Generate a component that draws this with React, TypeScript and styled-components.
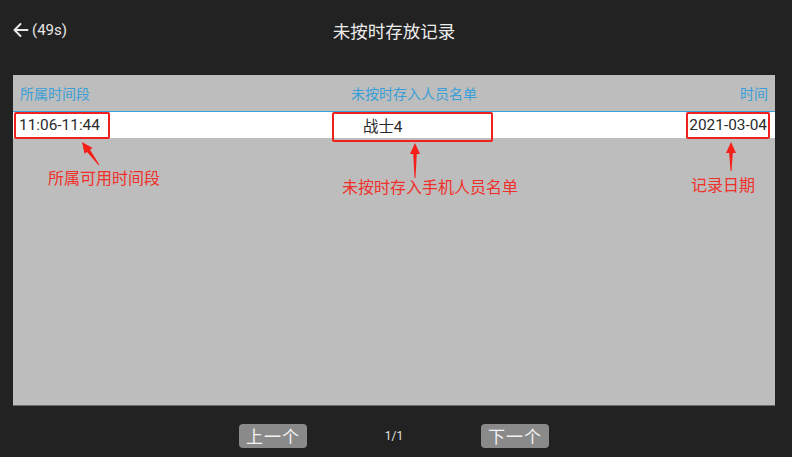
import React from "react";
import styled, { createGlobalStyle } from "styled-components";

const Global = createGlobalStyle`
  html, body { margin: 0; padding: 0; background: #222222; }
  body { font-family: Roboto, "Noto Sans CJK SC", sans-serif; }
  * { box-sizing: border-box; }
`;

const Page = styled.div`
  width: 792px;
  height: 457px;
  background: #222222;
  display: flex;
  flex-direction: column;
  overflow: hidden;
`;

const TopBar = styled.div`
  height: 60px;
  display: grid;
  grid-template-columns: 1fr auto 1fr;
  align-items: center;
  padding: 0 12px 0 12px;
`;

const Back = styled.div`
  display: flex;
  align-items: center;
  gap: 3px;
  color: #e6e6e6;
  font-size: 15px;
  font-family: Roboto, sans-serif;
`;

const Title = styled.div`
  color: #ececec;
  font-size: 17.5px;
  font-family: "Noto Sans CJK SC", sans-serif;
  transform: translateX(-2px);
`;

const Panel = styled.div`
  position: relative;
  margin: 15px 17px 0 13px;
  height: 331px;
  background: #bdbdbd;
  border-bottom: 1px solid #6c6c6c;
`;

const HeaderRow = styled.div`
  display: grid;
  grid-template-columns: 293px 202px 1fr;
  align-items: center;
  height: 37px;
  padding: 0 7px;
  border-bottom: 1px solid #3ba3dc;
  color: #3a9fd8;
  font-size: 14px;
  font-family: "Noto Sans CJK SC", sans-serif;
`;

const Cell = styled.div<{ $align?: string; $pad?: number }>`
  text-align: ${(p) => p.$align || "left"};
  padding-left: ${(p) => p.$pad || 0}px;
  white-space: nowrap;
`;

const DataRow = styled.div`
  display: grid;
  grid-template-columns: 293px 202px 1fr;
  align-items: center;
  height: 26px;
  background: #ffffff;
  padding: 0 8px 0 6px;
  color: #2a2a2a;
  font-size: 15.4px;
  font-family: Roboto, "Noto Sans CJK SC", sans-serif;
`;

const Box = styled.div<{ $l: number; $t: number; $w: number; $h: number }>`
  position: absolute;
  left: ${(p) => p.$l}px;
  top: ${(p) => p.$t}px;
  width: ${(p) => p.$w}px;
  height: ${(p) => p.$h}px;
  border: 2px solid #f0201c;
  border-radius: 2px;
  pointer-events: none;
`;

const Note = styled.div<{ $l: number; $t: number }>`
  position: absolute;
  left: ${(p) => p.$l}px;
  top: ${(p) => p.$t}px;
  color: #f0302a;
  font-size: 16px;
  font-family: "Noto Sans CJK SC", sans-serif;
  white-space: nowrap;
  line-height: 20px;
`;

const Overlay = styled.svg`
  position: absolute;
  left: 0;
  top: 0;
  pointer-events: none;
`;

const Footer = styled.div`
  flex: 1;
  display: flex;
  align-items: center;
  justify-content: center;
  padding: 8px 17px 0 13px;
`;

const PageBtn = styled.div`
  width: 68px;
  height: 24px;
  border-radius: 4px;
  background: #8a8a8a;
  color: #f2f2f2;
  font-size: 17px;
  font-family: "Noto Sans CJK SC", sans-serif;
  display: flex;
  align-items: center;
  justify-content: center;
  letter-spacing: 1px;
`;

const PageNum = styled.div`
  width: 174px;
  text-align: center;
  color: #e0e0e0;
  font-size: 12px;
  font-family: Roboto, sans-serif;
`;

function arrowPoints(tx: number, ty: number, sx: number, sy: number) {
  const dx = sx - tx;
  const dy = sy - ty;
  const len = Math.hypot(dx, dy);
  const ux = dx / len;
  const uy = dy / len;
  const nx = -uy;
  const ny = ux;
  const hl = 11;
  const hw = 5;
  const sw = 1.8;
  const tw = 0.5;
  const bx = tx + ux * hl;
  const by = ty + uy * hl;
  const pts = [
    [tx, ty],
    [bx + nx * hw, by + ny * hw],
    [bx + nx * sw, by + ny * sw],
    [sx + nx * tw, sy + ny * tw],
    [sx - nx * tw, sy - ny * tw],
    [bx - nx * sw, by - ny * sw],
    [bx - nx * hw, by - ny * hw],
  ];
  return pts.map((p) => p.map((v) => v.toFixed(1)).join(",")).join(" ");
}

const arrows = [
  { tx: 69, ty: 67, sx: 86, sy: 90 },
  { tx: 402, ty: 68, sx: 402, sy: 103 },
  { tx: 718, ty: 67, sx: 718, sy: 96 },
];

export default function App() {
  return (
    <>
      <Global />
      <Page>
        <TopBar>
          <Back>
            <svg width="17" height="16" viewBox="0 0 17 16">
              <path d="M15.5 8H2.5M8.5 2L2.5 8L8.5 14" fill="none" stroke="#e8e8e8" strokeWidth="2" strokeLinecap="round" strokeLinejoin="round" />
            </svg>
            <span>(49s)</span>
          </Back>
          <Title>未按时存放记录</Title>
          <div />
        </TopBar>
        <Panel>
          <HeaderRow>
            <Cell>所属时间段</Cell>
            <Cell $align="center">未按时存入人员名单</Cell>
            <Cell $align="right">时间</Cell>
          </HeaderRow>
          <DataRow>
            <Cell>11:06-11:44</Cell>
            <Cell $pad={51}>战士4</Cell>
            <Cell $align="right">2021-03-04</Cell>
          </DataRow>
          <Box $l={1} $t={37} $w={96} $h={27} />
          <Box $l={319} $t={37} $w={161} $h={30} />
          <Box $l={673} $t={37} $w={84} $h={27} />
          <Overlay width="762" height="331" viewBox="0 0 762 331">
            {arrows.map((a, i) => (
              <polygon key={i} points={arrowPoints(a.tx, a.ty, a.sx, a.sy)} fill="#f5201a" />
            ))}
          </Overlay>
          <Note $l={35} $t={92}>所属可用时间段</Note>
          <Note $l={329} $t={101}>未按时存入手机人员名单</Note>
          <Note $l={678} $t={99}>记录日期</Note>
        </Panel>
        <Footer>
          <PageBtn>上一个</PageBtn>
          <PageNum>1/1</PageNum>
          <PageBtn>下一个</PageBtn>
        </Footer>
      </Page>
    </>
  );
}
